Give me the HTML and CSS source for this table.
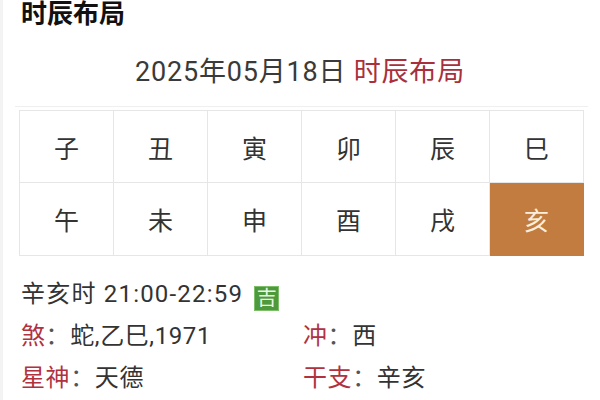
FILE: index.html
```html
<!DOCTYPE html>
<html lang="zh">
<head>
<meta charset="utf-8">
<title>时辰布局</title>
<link rel="stylesheet" href="styles.css">
</head>
<body>
<div class="page">
  <h1 class="title">时辰布局</h1>
  <div class="date-head">2025年05月18日 <span class="red">时辰布局</span></div>
  <div class="grid">
    <div class="cell">子</div>
    <div class="cell">丑</div>
    <div class="cell">寅</div>
    <div class="cell">卯</div>
    <div class="cell">辰</div>
    <div class="cell">巳</div>
    <div class="cell">午</div>
    <div class="cell">未</div>
    <div class="cell">申</div>
    <div class="cell">酉</div>
    <div class="cell">戌</div>
    <div class="cell active">亥</div>
  </div>
  <div class="info">
    <div class="line full"><span class="time">辛亥时 21:00-22:59</span><span class="badge">吉</span></div>
    <div class="line"><span class="label">煞</span><span class="colon">：</span>蛇,乙巳,1971</div>
    <div class="line"><span class="label">冲</span><span class="colon">：</span>西</div>
    <div class="line"><span class="label">星神</span><span class="colon">：</span>天德</div>
    <div class="line"><span class="label">干支</span><span class="colon">：</span>辛亥</div>
  </div>
</div>
</body>
</html>
```

FILE: styles.css
```css
html, body {
  margin: 0;
  padding: 0;
  background: #ffffff;
}

body {
  font-family: Roboto, "Noto Sans CJK SC", sans-serif;
  color: #333333;
}

.page {
  width: 600px;
  height: 400px;
  box-sizing: border-box;
  border-left: 3px solid #f3f3f3;
  overflow: hidden;
}

.title {
  margin: 0;
  padding-left: 18px;
  font-size: 26px;
  line-height: 28px;
  font-weight: 700;
  color: #111111;
}

.date-head {
  margin: 28px 12px 0 12px;
  padding-bottom: 18px;
  border-bottom: 1px solid #efefef;
  text-align: center;
  font-size: 27px;
  line-height: 32px;
  letter-spacing: 0.8px;
  color: #3a3a3a;
  padding-right: 3px;
}

.red {
  color: #a9303b;
}

.grid {
  margin: 3px 0 0 16px;
  width: 565px;
  display: grid;
  grid-template-columns: repeat(6, 94px);
  grid-template-rows: 72px 73px;
  border-top: 1px solid #e6e6e6;
  border-left: 1px solid #e6e6e6;
  box-sizing: border-box;
}

.cell {
  display: flex;
  align-items: center;
  justify-content: center;
  border-right: 1px solid #e6e6e6;
  border-bottom: 1px solid #e6e6e6;
  font-size: 25px;
  color: #333333;
}

.cell.active {
  background: #c27c40;
  color: #fbeedb;
  border-color: #c27c40;
}

.info {
  margin-top: 17px;
  padding-left: 18px;
  display: grid;
  grid-template-columns: 282px 1fr;
  font-size: 24px;
  line-height: 42px;
  letter-spacing: 0.6px;
  color: #333333;
}

.line {
  display: flex;
  align-items: center;
  white-space: nowrap;
}

.line.full {
  grid-column: 1 / 3;
}

.time {
  letter-spacing: 1.2px;
}

.label {
  color: #b0323f;
}

.colon {
  color: #555555;
}

.badge {
  display: inline-flex;
  align-items: center;
  justify-content: center;
  width: 25px;
  height: 25px;
  box-sizing: border-box;
  margin-left: 11px;
  margin-top: 8px;
  background: #4c9a3b;
  border: 1px solid #7dbf68;
  color: #eaf6e2;
  font-size: 20px;
  letter-spacing: 0;
  line-height: 1;
}
```
